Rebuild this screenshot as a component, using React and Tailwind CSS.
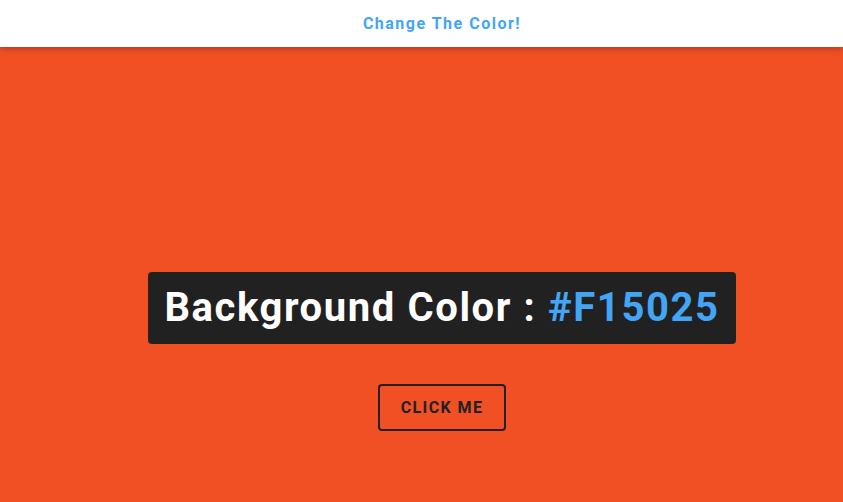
import React, { useState } from "react";

const App = () => {
  const [color] = useState("#F15025");

  return (
    <div className="min-h-screen bg-[#F15025] font-['Roboto',sans-serif]">
      {/* Header */}
      <nav className="h-[47px] pl-[41px] bg-white shadow-[0_2px_6px_rgba(0,0,0,0.25)] flex items-center justify-center">
        <a href="#" className="text-[16px] font-bold tracking-[1.5px] text-[#42a5f5]">
          Change The Color!
        </a>
      </nav>

      <main className="flex flex-col items-center pl-[41px] pt-[225px]">
        <div className="h-[72px] px-[16px] bg-[#212121] rounded-[4px] flex items-center">
          <h2 className="text-[40px] font-bold tracking-[1.6px] text-white leading-none">
            Background Color : <span className="text-[#42a5f5]">{color}</span>
          </h2>
        </div>
        <button className="mt-[40px] h-[47px] w-[128px] border-2 border-[#212121] rounded-[4px] text-[16px] font-bold tracking-[1.4px] text-[#212121] uppercase">
          Click Me
        </button>
      </main>
    </div>
  );
};

export default App;
